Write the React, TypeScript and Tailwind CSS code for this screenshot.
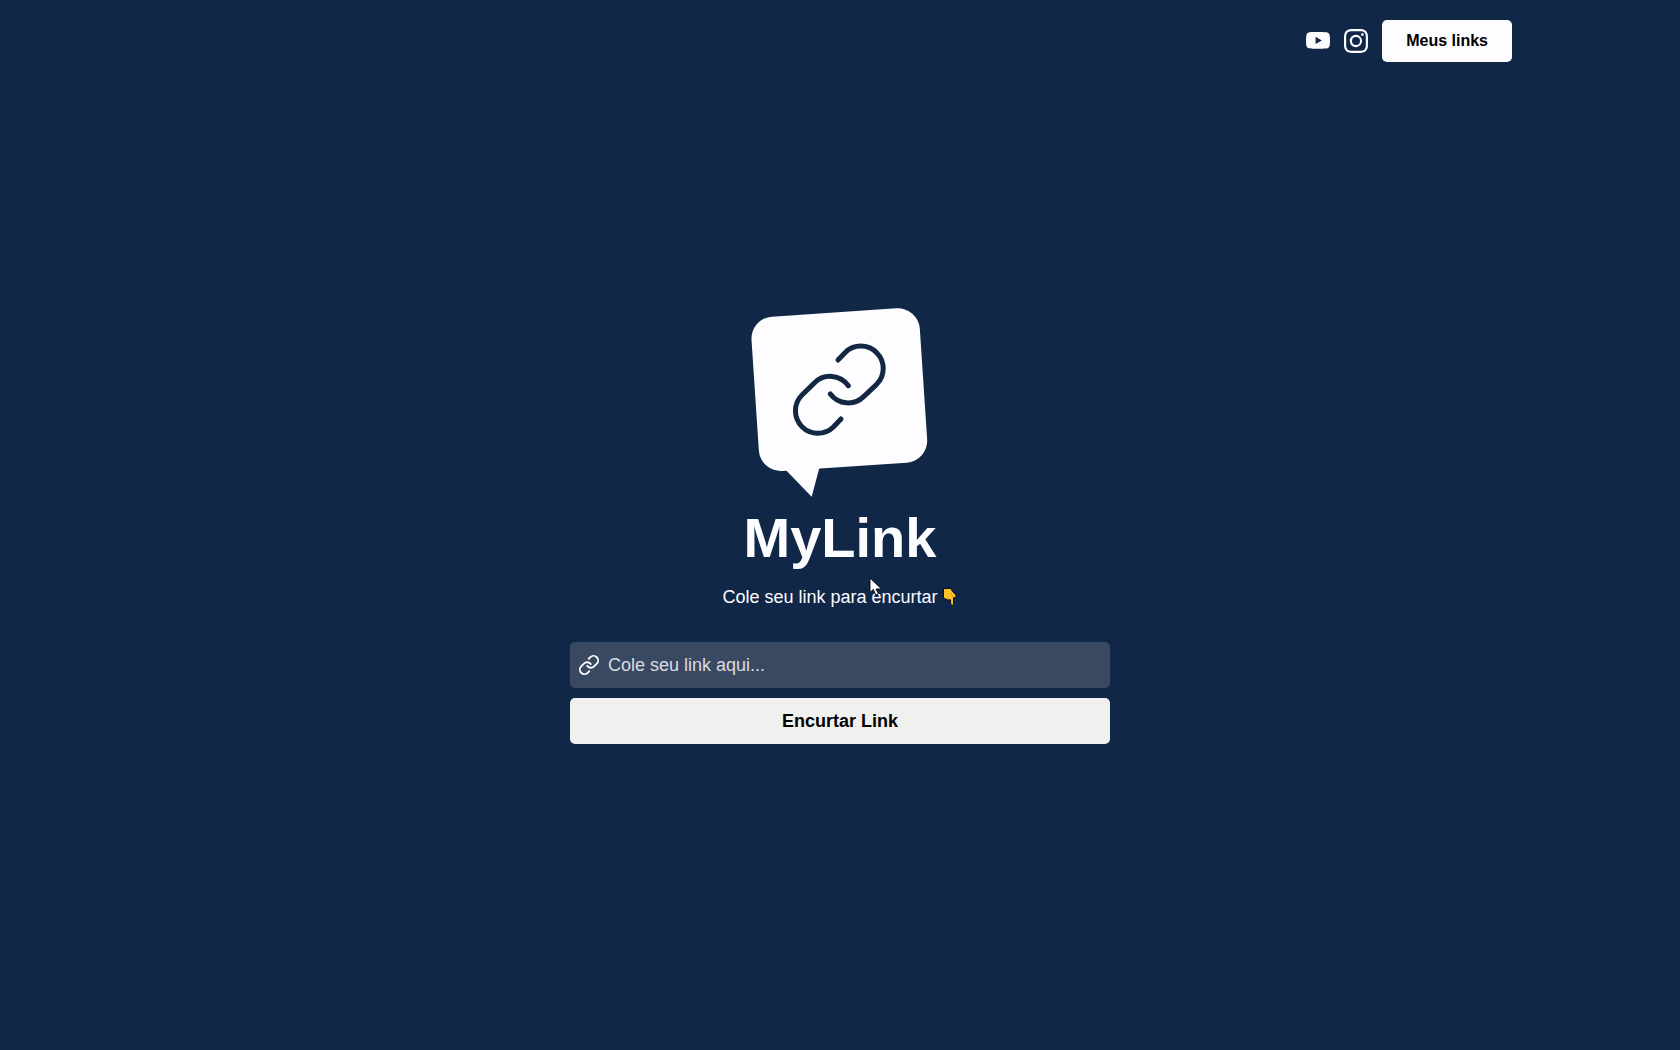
import React from "react";
import { BsInstagram, BsYoutube } from "react-icons/bs";
import { FiLink } from "react-icons/fi";

function Logo() {
  return (
    <svg className="h-[189px] w-[176px] overflow-visible" viewBox="66 54 528 567" role="img" aria-label="MyLink logo">
      <rect x="75" y="67" width="506" height="464" rx="66" fill="#fdfdff" transform="rotate(-3.8 328 299)" />
      <path d="M168 541 L245 620 L268 534 L240 500 Z" fill="#fdfdff" />
      <g fill="none" stroke="#132742" strokeWidth="15" strokeLinecap="round" strokeLinejoin="round">
        <path d="M324 210 L345 188 A66 66 0 0 1 440 283 L401 320 A67 67 0 0 1 301 312" />
        <path d="M355 287 A67 67 0 0 0 253 279 L216 315 A66 66 0 0 0 311 410 L333 387" />
      </g>
    </svg>
  );
}

function PointingHand() {
  return (
    <svg className="h-5 w-4" viewBox="0 0 16 20" aria-hidden="true">
      <path
        d="M1.5 1.5 H8.8 L10.5 4.5 L14 8 V10.2 L12.2 10.8 L11.6 10.5 V17 Q10.2 19.6 8.6 17 V12.8 L6 13 L4 12.4 L1.5 10.5 Z"
        fill="#ffc02e"
        stroke="#0a0d12"
        strokeWidth="1"
        strokeLinejoin="round"
      />
      <path d="M9 6 L11.6 10.2 M4 11.2 L7 11.5" stroke="#e08a1c" strokeWidth="0.8" fill="none" />
    </svg>
  );
}

function Pointer() {
  return (
    <svg className="absolute -top-[6px] left-[147px] h-5 w-[14px]" viewBox="0 0 14 20" aria-hidden="true">
      <path d="M1 1 V15.5 L4.3 12.4 L6.8 18 L9.5 16.8 L7 12 H12.5 Z" fill="#fff" stroke="#0a0d12" strokeWidth="1" />
    </svg>
  );
}

export default function App() {
  return (
    <div className="flex min-h-screen flex-col bg-[#102748] font-['Liberation_Sans',Arial,sans-serif] text-[#fdfdff]">
      <header className="mx-auto flex h-[82px] w-4/5 items-center justify-end gap-[14px]">
        <a href="#youtube" aria-label="YouTube">
          <BsYoutube className="size-6" />
        </a>
        <a href="#instagram" aria-label="Instagram">
          <BsInstagram className="size-6" />
        </a>
        <a href="#links" className="rounded-[5px] bg-[#fdfdff] px-6 py-[9px] text-base font-bold text-black">
          Meus links
        </a>
      </header>

      <main className="flex flex-1 flex-col items-center justify-center px-4 pb-20">
        <Logo />
        <h1 className="mt-[9px] text-[56px] leading-[64px] font-bold">MyLink</h1>
        <p className="relative mt-[13px] flex items-center gap-1 text-lg">
          Cole seu link para encurtar
          <PointingHand />
          <Pointer />
        </p>
        <form className="mt-[31px] flex w-full max-w-[540px] flex-col gap-[10px]" onSubmit={(e) => e.preventDefault()}>
          <label className="flex h-[46px] items-center gap-2 rounded-[5px] bg-[#3a4962] px-2">
            <FiLink className="size-[22px] shrink-0" aria-hidden="true" />
            <input
              type="url"
              aria-label="Link"
              placeholder="Cole seu link aqui..."
              className="min-w-0 flex-1 bg-transparent text-lg outline-none placeholder:text-[#dadbe0]"
            />
          </label>
          <button type="submit" className="h-[46px] rounded-[5px] bg-[#f0f0ee] text-lg font-bold text-black">
            Encurtar Link
          </button>
        </form>
      </main>
    </div>
  );
}
